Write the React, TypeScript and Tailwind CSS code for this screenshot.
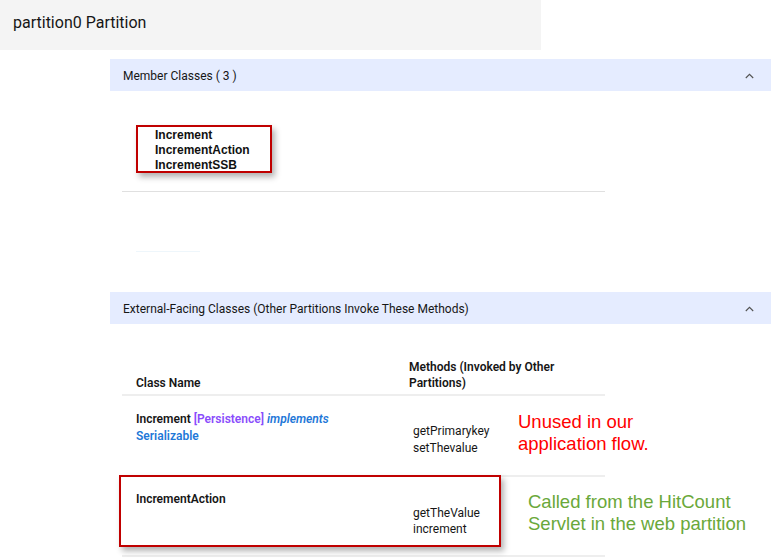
import React from "react";

const Chevron: React.FC = () => (
  <svg width="9" height="6" viewBox="0 0 9 6" fill="none" className="mr-[17px]">
    <path d="M0.8 5 L4.5 1.3 L8.2 5" stroke="#525252" strokeWidth="1.1" />
  </svg>
);

const SectionBar: React.FC<{ title: string }> = ({ title }) => (
  <div className="flex h-8 items-center justify-between bg-[#e5ecff] pl-[13px] pt-[1px] text-[12px] text-[#161616]">
    <span>{title}</span>
    <Chevron />
  </div>
);

const App: React.FC = () => {
  const memberClasses = ["Increment", "IncrementAction", "IncrementSSB"];

  return (
    <div className="h-[560px] w-[777px] overflow-hidden bg-white font-['Roboto','Noto_Sans',sans-serif] text-[#161616]">
      <div className="flex h-[50px] w-[541px] items-center bg-[#f4f4f4] pl-[13px] pb-[4px] text-[16px]">
        partition0 Partition
      </div>

      <div className="relative ml-[110px] mt-[9px] w-[661px]">
        <SectionBar title="Member Classes ( 3 )" />

        <div className="pl-[12px]">
          <div className="w-[483px] border-b border-[#e0e0e0] pt-[34px] pb-[18px]">
            <div className="ml-[14px] flex h-[48px] w-[136px] flex-col border-2 border-[#c00000] pl-[17px] pt-[1px] font-['Liberation_Sans',Arial,sans-serif] text-[12px] font-bold leading-[15px] text-[#111] shadow-[3px_4px_6px_rgba(0,0,0,0.3)]">
              {memberClasses.map((c) => (
                <span key={c}>{c}</span>
              ))}
            </div>
          </div>
          <div className="ml-[14px] mt-[59px] h-px w-[64px] bg-[#eef6fb]" />
        </div>

        <div className="mt-[40px]">
          <SectionBar title="External-Facing Classes (Other Partitions Invoke These Methods)" />
        </div>

        <div className="pl-[12px] text-[12px]">
          <div className="w-[483px]">
            <div className="flex border-b-2 border-[#eeeeee] pt-[35px] pb-[3px] font-semibold leading-[16px]">
              <div className="w-[287px] self-end pl-[14px]">Class Name</div>
              <div className="w-[150px]">Methods (Invoked by Other Partitions)</div>
            </div>

            <div className="flex h-[81px] border-b-2 border-[#eeeeee] leading-[17px]">
              <div className="w-[287px] pl-[14px] pr-[50px] pt-[15px] font-semibold">
                Increment <span className="text-[#8a4dfc]">[Persistence]</span>{" "}
                <span className="italic text-[#1f78d8]">implements</span>{" "}
                <span className="text-[#1f78d8]">Serializable</span>
              </div>
              <div className="flex flex-col pl-[4px] pt-[27px]">
                <span>getPrimarykey</span>
                <span>setThevalue</span>
              </div>
            </div>

            <div className="relative flex h-[80px] border-b-2 border-[#eeeeee] leading-[16px]">
              <div className="w-[287px] pl-[14px] pt-[14px] font-semibold">IncrementAction</div>
              <div className="flex flex-col pl-[4px] pt-[28px]">
                <span>getTheValue</span>
                <span>increment</span>
              </div>
              <div className="absolute left-[-3px] top-[-2px] h-[72px] w-[382px] border-2 border-[#c00000] shadow-[3px_4px_6px_rgba(0,0,0,0.3)]" />
            </div>
          </div>
        </div>

        <div className="absolute left-[408px] top-[352px] font-['Liberation_Sans',Arial,sans-serif] text-[18.5px] leading-[22px] text-[#ff0000]">
          Unused in our
          <br />
          application flow.
        </div>
        <div className="absolute left-[418px] top-[432px] font-['Liberation_Sans',Arial,sans-serif] text-[18.5px] leading-[22px] text-[#6aa83a]">
          Called from the HitCount
          <br />
          Servlet in the web partition
        </div>
      </div>
    </div>
  );
};

export default App;
